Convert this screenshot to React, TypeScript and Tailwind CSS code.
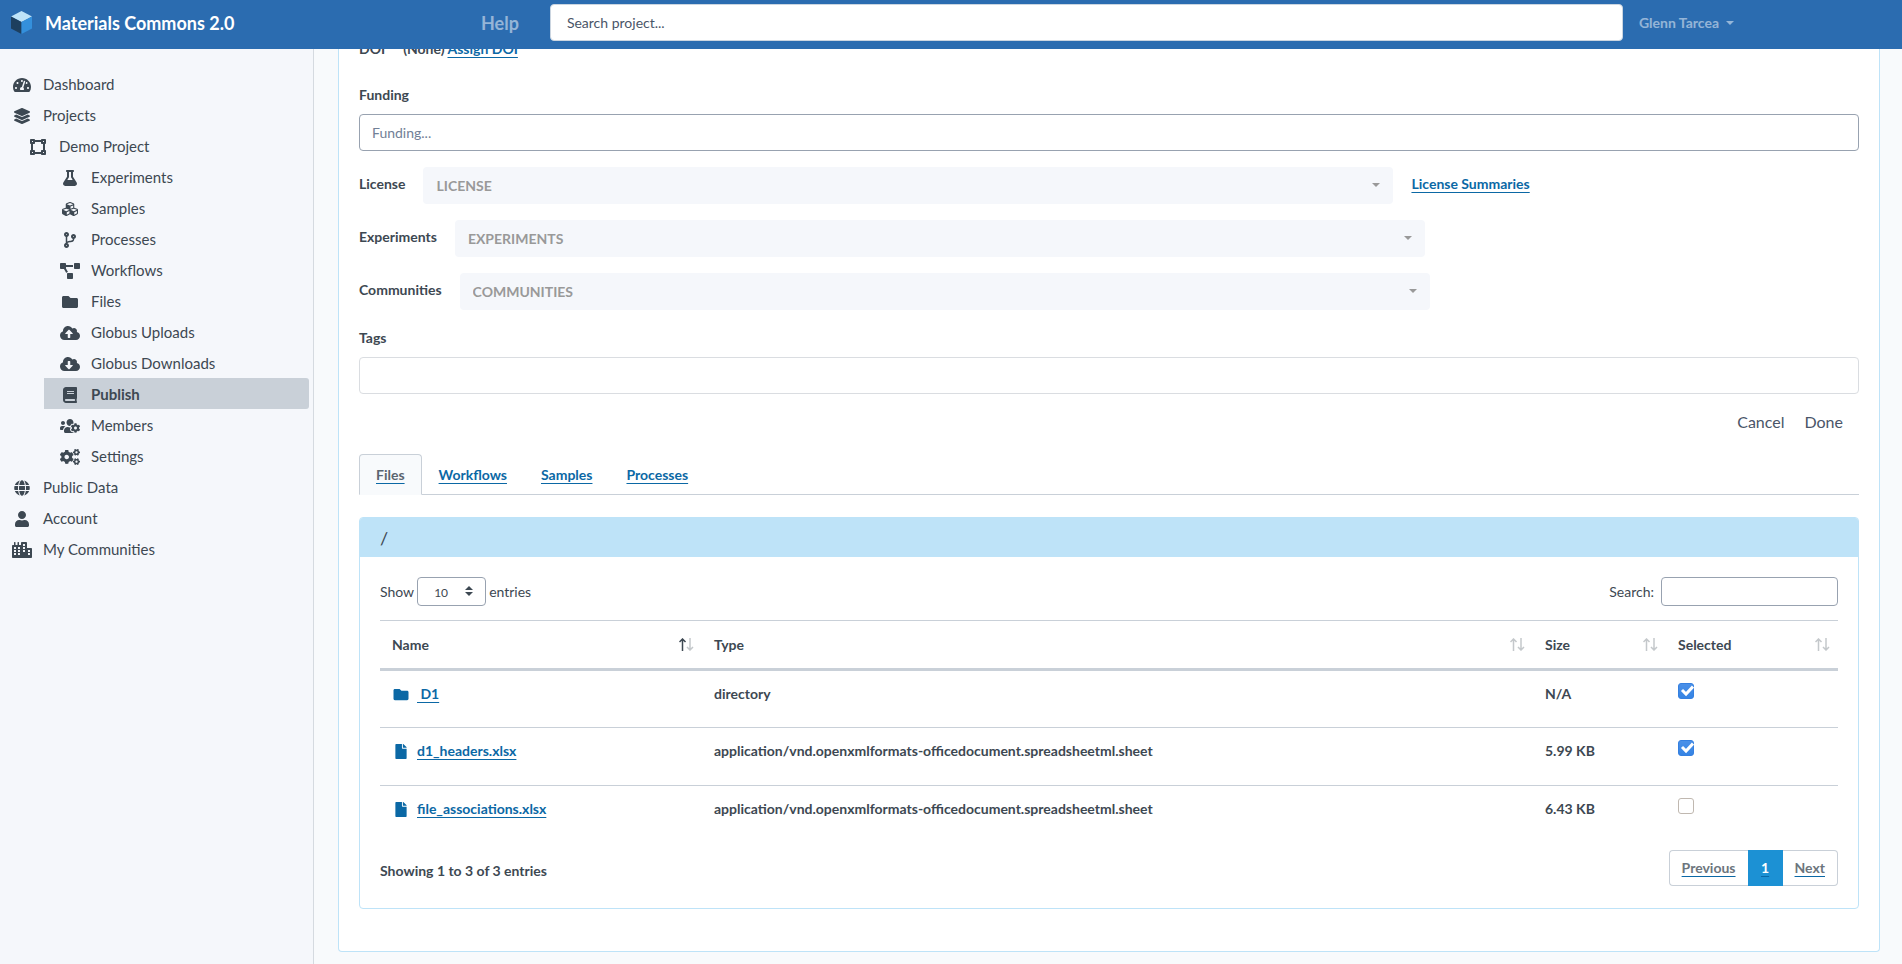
import type { ReactNode } from 'react'
import type { IconType } from 'react-icons'
import {
  FaBook,
  FaCity,
  FaCloudDownloadAlt,
  FaCloudUploadAlt,
  FaCodeBranch,
  FaCogs,
  FaCubes,
  FaFile,
  FaFlask,
  FaFolder,
  FaGlobe,
  FaLayerGroup,
  FaProjectDiagram,
  FaTachometerAlt,
  FaUser,
  FaUsersCog,
  FaVectorSquare
} from 'react-icons/fa'
import clsx from 'clsx'

type NavItem = {
  label: string
  icon: IconType
  level: 0 | 1 | 2
  active?: boolean
}

const NAV_ITEMS: NavItem[] = [
  { label: 'Dashboard', icon: FaTachometerAlt, level: 0 },
  { label: 'Projects', icon: FaLayerGroup, level: 0 },
  { label: 'Demo Project', icon: FaVectorSquare, level: 1 },
  { label: 'Experiments', icon: FaFlask, level: 2 },
  { label: 'Samples', icon: FaCubes, level: 2 },
  { label: 'Processes', icon: FaCodeBranch, level: 2 },
  { label: 'Workflows', icon: FaProjectDiagram, level: 2 },
  { label: 'Files', icon: FaFolder, level: 2 },
  { label: 'Globus Uploads', icon: FaCloudUploadAlt, level: 2 },
  { label: 'Globus Downloads', icon: FaCloudDownloadAlt, level: 2 },
  { label: 'Publish', icon: FaBook, level: 2, active: true },
  { label: 'Members', icon: FaUsersCog, level: 2 },
  { label: 'Settings', icon: FaCogs, level: 2 },
  { label: 'Public Data', icon: FaGlobe, level: 0 },
  { label: 'Account', icon: FaUser, level: 0 },
  { label: 'My Communities', icon: FaCity, level: 0 }
]

const LEVEL_CLASS = ['pl-3', 'pl-7', 'ml-11 pl-4']

const TABS = ['Files', 'Workflows', 'Samples', 'Processes']

const FILES = [
  { name: ' D1', icon: FaFolder, type: 'directory', size: 'N/A', selected: true },
  {
    name: 'd1_headers.xlsx',
    icon: FaFile,
    type: 'application/vnd.openxmlformats-officedocument.spreadsheetml.sheet',
    size: '5.99 KB',
    selected: true
  },
  {
    name: 'file_associations.xlsx',
    icon: FaFile,
    type: 'application/vnd.openxmlformats-officedocument.spreadsheetml.sheet',
    size: '6.43 KB',
    selected: false
  }
]

function Link({
  children,
  className = 'text-[#0b68a5]'
}: {
  children: ReactNode
  className?: string
}) {
  return (
    <a
      href="#"
      className={clsx(
        'whitespace-pre underline decoration-[#0b68a5] decoration-1 underline-offset-3',
        className
      )}
    >
      {children}
    </a>
  )
}

function Logo() {
  return (
    <svg viewBox="0 0 21 23" className="h-[23px] w-[21px]" aria-hidden="true">
      <path d="M10.5 0 21 5.5 10.5 11 0 5.5z" fill="#bee3f8" />
      <path d="M0 5.5 10.5 11v12L0 17.5z" fill="#1d3f5e" />
      <path d="M21 5.5 10.5 11v12L21 17.5z" fill="#3490dc" />
    </svg>
  )
}

function Caret({ className }: { className?: string }) {
  return (
    <svg viewBox="0 0 8 4" className={clsx('h-1 w-2', className)} aria-hidden="true">
      <path d="M0 0h8L4 4z" fill="currentColor" />
    </svg>
  )
}

function SortIcon({ sorted }: { sorted?: boolean }) {
  return (
    <svg
      viewBox="0 0 15 13"
      className="h-[13px] w-[15px]"
      fill="none"
      stroke="currentColor"
      strokeWidth="1.5"
      aria-hidden="true"
    >
      <path d="M3.5 13V1M.5 4l3-3 3 3" opacity={sorted ? 1 : 0.3} />
      <path d="M11 0v12M8 9l3 3 3-3" opacity="0.3" />
    </svg>
  )
}

function Checkbox({ label, checked }: { label: string; checked: boolean }) {
  return (
    <div className="relative size-4">
      <input
        type="checkbox"
        aria-label={label}
        defaultChecked={checked}
        className="peer block size-4 appearance-none rounded-[3px] border border-[#c0b8b0] bg-white checked:border-[#3580e0] checked:bg-linear-to-b checked:from-[#4a90e8] checked:to-[#3584e4]"
      />
      <svg
        viewBox="0 0 16 16"
        className="pointer-events-none absolute inset-0 hidden size-4 peer-checked:block"
        aria-hidden="true"
      >
        <path d="M4 7 8 11 15 3.5" fill="none" stroke="#fff" strokeWidth="3" />
      </svg>
    </div>
  )
}

function Header() {
  return (
    <header className="fixed inset-x-0 top-0 z-10 flex h-[49px] items-center bg-[#2b6cb0] pb-1">
      <a
        href="#"
        className="flex w-[481px] items-center gap-[13px] pl-[11px] text-lg font-bold text-white"
      >
        <Logo />
        Materials Commons 2.0
      </a>
      <a href="#" className="mr-[31px] text-lg font-bold text-white/50">
        Help
      </a>
      <input
        type="text"
        aria-label="Search project"
        placeholder="Search project..."
        className="h-[37px] flex-1 rounded border border-[#cbd5e0] bg-white px-4 text-sm placeholder:text-[#4a5568]"
      />
      <button
        type="button"
        className="ml-4 mr-[168px] flex items-center gap-[7px] text-sm font-bold text-white/50"
      >
        Glenn Tarcea
        <Caret />
      </button>
    </header>
  )
}

function Sidebar() {
  return (
    <nav className="w-[314px] shrink-0 border-r border-[#d5dae0] bg-[#f5f7fb] pr-1 pt-[19px]">
      {NAV_ITEMS.map(({ label, icon: Icon, level, active }) => (
        <a
          key={label}
          href="#"
          className={clsx(
            'flex h-[31px] items-center gap-[11px] pt-0.5 text-[15px]',
            LEVEL_CLASS[level],
            active && 'rounded-r-[3px] bg-[#c9d0d8] font-bold'
          )}
        >
          <Icon className="h-4 w-5" />
          {label}
        </a>
      ))}
    </nav>
  )
}

function PickerRow({ label, children }: { label: string; children?: ReactNode }) {
  const id = label.toLowerCase()

  return (
    <div className="mb-4 flex items-start gap-[18px]">
      <label htmlFor={id} className="pt-[7px]">
        {label}
      </label>
      <div className="relative w-[970px]">
        <select
          id={id}
          className="block h-[37px] w-full appearance-none rounded bg-[#f5f7fb] px-[13px] text-sm uppercase text-[#999]"
        >
          <option>{label}</option>
        </select>
        <Caret className="pointer-events-none absolute right-[13px] top-4 text-[#999]" />
      </div>
      {children && <div className="pt-[7px]">{children}</div>}
    </div>
  )
}

function FilesTable() {
  return (
    <table className="w-full table-fixed border-collapse text-left">
      <thead>
        <tr className="h-[49px] border-t border-b-3 border-[#c9d0d8]">
          {['Name', 'Type', 'Size', 'Selected'].map((title, i) => (
            <th
              key={title}
              className={clsx(
                'pl-3 pr-2 font-bold',
                i === 0 && 'w-[322px]',
                i === 2 && 'w-[133px]',
                i === 3 && 'w-[172px]'
              )}
            >
              <div className="flex items-center justify-between">
                {title}
                <SortIcon sorted={i === 0} />
              </div>
            </th>
          ))}
        </tr>
      </thead>
      <tbody>
        {FILES.map(({ name, icon: Icon, type, size, selected }) => (
          <tr
            key={name}
            className="h-[58px] border-b border-[#c9d0d8] align-top last:border-b-0"
          >
            <td className="px-3 pt-[13px]">
              <div className="flex items-center gap-[7px]">
                <Icon className="h-[15px] w-[18px] text-[#0b68a5]" />
                <Link>{name}</Link>
              </div>
            </td>
            <td className="px-3 pt-[13px]">{type}</td>
            <td className="px-3 pt-[13px]">{size}</td>
            <td className="px-3 pt-3">
              <Checkbox label={`Select ${name.trim()}`} checked={selected} />
            </td>
          </tr>
        ))}
      </tbody>
    </table>
  )
}

function Pagination() {
  return (
    <div className="flex h-9">
      <div className="flex items-center rounded-l border border-r-0 border-[#c9d0d8] px-3">
        <Link className="text-[#6c757d]">Previous</Link>
      </div>
      <div className="flex w-[35px] items-center justify-center bg-[#1c91d4]">
        <Link className="text-white">1</Link>
      </div>
      <div className="flex items-center rounded-r border border-l-0 border-[#c9d0d8] px-3">
        <Link className="text-[#6c757d]">Next</Link>
      </div>
    </div>
  )
}

function FilesCard() {
  return (
    <section className="mt-[22px] overflow-hidden rounded border border-[#bee3f8]">
      <h2 className="flex h-[39px] items-center bg-[#bee3f8] px-5 text-lg font-normal">/</h2>
      <div className="px-5 pb-[22px] pt-5">
        <div className="mb-[14px] flex items-center justify-between font-normal">
          <label className="flex items-center gap-[3px]">
            Show
            <div className="relative">
              <select className="block h-[29px] w-[69px] appearance-none rounded border border-[#98a2b0] bg-white pl-4 pt-0.5 text-xs">
                <option>10</option>
              </select>
              <svg
                viewBox="0 0 8 10"
                className="pointer-events-none absolute right-[13px] top-[9px] h-[10px] w-2"
                aria-hidden="true"
              >
                <path d="M0 4h8L4 0zM0 6h8L4 10z" fill="currentColor" />
              </svg>
            </div>
            entries
          </label>
          <label className="flex items-center gap-[7px]">
            Search:
            <input
              type="search"
              className="h-[29px] w-[177px] rounded border border-[#98a2b0] bg-white px-2"
            />
          </label>
        </div>
        <FilesTable />
        <div className="mt-[6px] flex items-center justify-between">
          <p className="pt-[6px]">Showing 1 to 3 of 3 entries</p>
          <Pagination />
        </div>
      </div>
    </section>
  )
}

export default function App() {
  return (
    <div className="flex min-h-screen bg-[#f8fafc] pt-[49px] font-['Lato',sans-serif] text-sm text-[#3d4852]">
      <Header />
      <Sidebar />
      <main className="ml-6 mr-[22px] mb-3 min-w-0 flex-1 rounded-b border border-t-0 border-[#bee3f8] bg-white px-5 pb-[42px] font-bold">
        <div className="-mt-[10px] flex">
          <span className="mr-[18px]">DOI</span>
          <span className="mr-[3px]">(None)</span>
          <Link>Assign DOI</Link>
        </div>

        <label htmlFor="funding" className="mt-[26px] block">
          Funding
        </label>
        <input
          id="funding"
          type="text"
          placeholder="Funding..."
          className="mt-[9px] mb-4 block h-[37px] w-full rounded border border-[#98a2b0] bg-white px-3 text-sm font-normal placeholder:text-[#718096]"
        />

        <PickerRow label="License">
          <Link>License Summaries</Link>
        </PickerRow>
        <PickerRow label="Experiments" />
        <PickerRow label="Communities" />

        <label htmlFor="tags" className="block pt-0.5">
          Tags
        </label>
        <input
          id="tags"
          type="text"
          className="mt-[9px] block h-[37px] w-full rounded border border-[#dadde1] bg-white px-3 text-sm font-normal"
        />

        <div className="mt-4 mb-5 flex justify-end gap-5 pr-4 text-base font-normal text-[#4a5568]">
          <button type="button">Cancel</button>
          <button type="button">Done</button>
        </div>

        <div className="flex border-b border-[#c9d0d8]">
          {TABS.map((tab, i) => (
            <div
              key={tab}
              className={clsx(
                '-mb-px flex h-[41px] items-center rounded-t border px-4',
                i === 0 ? 'border-[#c9d0d8] border-b-[#f8fafc] bg-[#f8fafc]' : 'border-transparent'
              )}
            >
              <Link className={i === 0 ? 'text-[#5b6570]' : 'text-[#0b68a5]'}>{tab}</Link>
            </div>
          ))}
        </div>

        <FilesCard />
      </main>
    </div>
  )
}
